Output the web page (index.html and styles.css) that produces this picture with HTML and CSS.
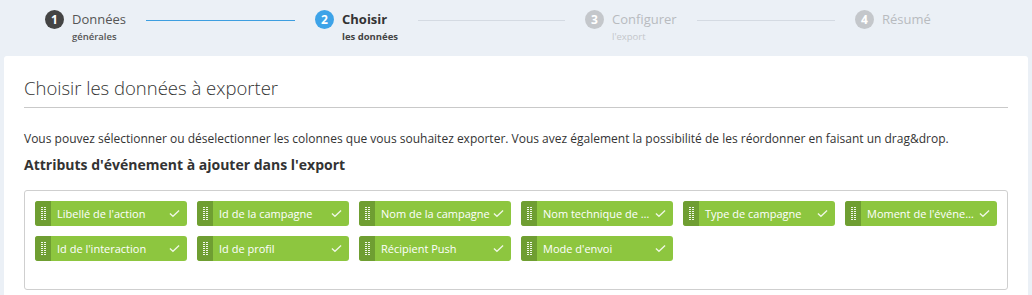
FILE: index.html
```html
<!DOCTYPE html>
<html lang="fr">
<head>
    <meta charset="UTF-8">
    <title>Export - Choisir les données</title>
    <link rel="stylesheet" href="styles.css">
</head>
<body>
    <div class="stepper">
        <div class="step done">
            <span class="step-num">1</span>
            <div class="step-text">
                <div class="step-title">Données</div>
                <div class="step-sub">générales</div>
            </div>
            <span class="step-line active"></span>
        </div>
        <div class="step current">
            <span class="step-num">2</span>
            <div class="step-text">
                <div class="step-title">Choisir</div>
                <div class="step-sub">les données</div>
            </div>
            <span class="step-line"></span>
        </div>
        <div class="step todo">
            <span class="step-num">3</span>
            <div class="step-text">
                <div class="step-title">Configurer</div>
                <div class="step-sub">l'export</div>
            </div>
            <span class="step-line"></span>
        </div>
        <div class="step todo last">
            <span class="step-num">4</span>
            <div class="step-text">
                <div class="step-title">Résumé</div>
            </div>
        </div>
    </div>

    <div class="card">
        <h2 class="card-title">Choisir les données à exporter</h2>
        <p class="intro">Vous pouvez sélectionner ou déselectionner les colonnes que vous souhaitez exporter. Vous avez également la possibilité de les réordonner en faisant un drag&amp;drop.</p>
        <h3 class="section-title">Attributs d'événement à ajouter dans l'export</h3>

        <div class="chip-box">
            <div class="chip"><span class="handle"><i></i></span><span class="chip-label">Libellé de l'action</span><svg class="check" viewBox="0 0 12 9"><path d="M1 4.5 4.3 7.6 11 1.2"/></svg></div>
            <div class="chip"><span class="handle"><i></i></span><span class="chip-label">Id de la campagne</span><svg class="check" viewBox="0 0 12 9"><path d="M1 4.5 4.3 7.6 11 1.2"/></svg></div>
            <div class="chip"><span class="handle"><i></i></span><span class="chip-label">Nom de la campagne</span><svg class="check" viewBox="0 0 12 9"><path d="M1 4.5 4.3 7.6 11 1.2"/></svg></div>
            <div class="chip"><span class="handle"><i></i></span><span class="chip-label">Nom technique de la campagne</span><svg class="check" viewBox="0 0 12 9"><path d="M1 4.5 4.3 7.6 11 1.2"/></svg></div>
            <div class="chip"><span class="handle"><i></i></span><span class="chip-label">Type de campagne</span><svg class="check" viewBox="0 0 12 9"><path d="M1 4.5 4.3 7.6 11 1.2"/></svg></div>
            <div class="chip"><span class="handle"><i></i></span><span class="chip-label">Moment de l'événement</span><svg class="check" viewBox="0 0 12 9"><path d="M1 4.5 4.3 7.6 11 1.2"/></svg></div>
            <div class="chip"><span class="handle"><i></i></span><span class="chip-label">Id de l'interaction</span><svg class="check" viewBox="0 0 12 9"><path d="M1 4.5 4.3 7.6 11 1.2"/></svg></div>
            <div class="chip"><span class="handle"><i></i></span><span class="chip-label">Id de profil</span><svg class="check" viewBox="0 0 12 9"><path d="M1 4.5 4.3 7.6 11 1.2"/></svg></div>
            <div class="chip"><span class="handle"><i></i></span><span class="chip-label">Récipient Push</span><svg class="check" viewBox="0 0 12 9"><path d="M1 4.5 4.3 7.6 11 1.2"/></svg></div>
            <div class="chip"><span class="handle"><i></i></span><span class="chip-label">Mode d'envoi</span><svg class="check" viewBox="0 0 12 9"><path d="M1 4.5 4.3 7.6 11 1.2"/></svg></div>
        </div>
    </div>
</body>
</html>
```

FILE: styles.css
```css
* {
    margin: 0;
    padding: 0;
    box-sizing: border-box;
}

body {
    font-family: "Open Sans", "Liberation Sans", sans-serif;
    background: #ebf0f6;
    color: #333;
    height: 295px;
    overflow: hidden;
}

/* Stepper */

.stepper {
    display: flex;
    height: 56px;
    padding: 10px 0 0 45px;
}

.step {
    display: flex;
    align-items: flex-start;
    width: 270px;
    flex-shrink: 0;
}

.step.last {
    width: auto;
}

.step-num {
    width: 19px;
    height: 19px;
    border-radius: 50%;
    color: white;
    font-size: 12px;
    font-weight: 700;
    line-height: 19px;
    text-align: center;
    flex-shrink: 0;
}

.step-text {
    margin-left: 8px;
}

.step-title {
    font-size: 13px;
    line-height: 19px;
}

.step-sub {
    font-size: 9.5px;
    font-weight: 600;
    line-height: 14px;
    margin-top: 1px;
}

.step-line {
    flex: 1;
    height: 1px;
    background: #d4dae2;
    margin: 10px 20px 0;
}

.step-line.active {
    background: #3d9ee0;
}

.done .step-num { background: #444; }
.done .step-title { color: #555; }
.done .step-sub { color: #555; }

.current .step-num { background: #3da3e8; }
.current .step-title { color: #333; font-weight: 700; }
.current .step-sub { color: #444; font-weight: 700; }

.todo .step-num { background: #c4c7cb; }
.todo .step-title { color: #b8bbbf; }
.todo .step-sub { color: #c4c7cb; font-weight: 400; }

/* Card */

.card {
    background: white;
    margin: 0 4px;
    border-radius: 3px 3px 0 0;
    padding: 18px 20px 0;
    height: 239px;
}

.card-title {
    font-size: 18.5px;
    font-weight: 300;
    color: #333;
    line-height: 28px;
    padding-bottom: 5px;
    border-bottom: 1px solid #c9c9c9;
}

.intro {
    font-size: 12px;
    line-height: 18px;
    color: #333;
    margin-top: 22px;
}

.section-title {
    font-size: 14px;
    font-weight: 700;
    line-height: 18px;
    color: #333;
    margin-top: 8px;
}

.chip-box {
    margin-top: 16px;
    border: 1px solid #cfcfcf;
    border-radius: 3px;
    padding: 10px 10px 28px;
    display: grid;
    grid-template-columns: repeat(6, 152px);
    gap: 10px;
}

.chip {
    display: flex;
    align-items: center;
    height: 25px;
    background: #8dc63f;
    border-radius: 3px;
    overflow: hidden;
    color: white;
}

.handle {
    width: 16px;
    height: 100%;
    background: #6f9e32;
    display: flex;
    align-items: center;
    justify-content: center;
    flex-shrink: 0;
}

.handle i {
    display: block;
    width: 5px;
    height: 14px;
    background: repeating-linear-gradient(to bottom, #f2f7ea 0 1px, transparent 1px 2px);
    position: relative;
}

.handle i::after {
    content: "";
    position: absolute;
    left: 2px;
    top: 0;
    width: 1px;
    height: 100%;
    background: #6f9e32;
}

.chip-label {
    flex: 1;
    font-size: 11px;
    padding-left: 6px;
    white-space: nowrap;
    overflow: hidden;
    text-overflow: ellipsis;
}

.check {
    width: 11px;
    height: 9px;
    margin: 0 7px 0 3px;
    flex-shrink: 0;
    fill: none;
    stroke: rgba(255, 255, 255, 0.85);
    stroke-width: 1.5;
}
```
